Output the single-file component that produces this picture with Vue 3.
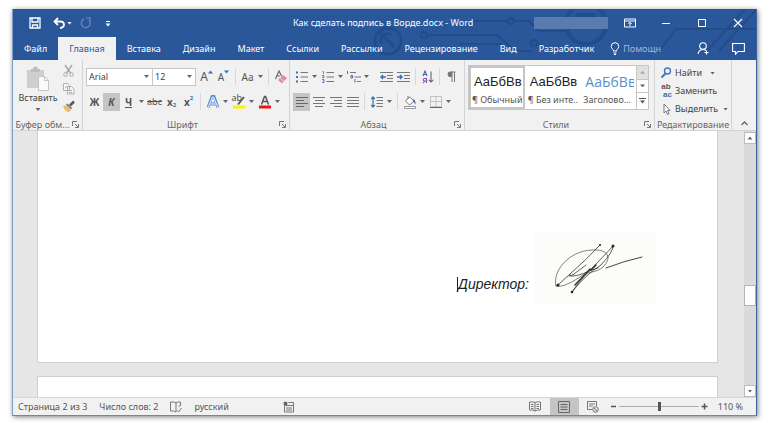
<script setup>
import { ref } from 'vue'

const tabs = ['Файл', 'Главная', 'Вставка', 'Дизайн', 'Макет', 'Ссылки', 'Рассылки', 'Рецензирование', 'Вид', 'Разработчик']
const activeTab = ref('Главная')
const styles = [
  { name: '¶ Обычный', kind: 'normal' },
  { name: '¶ Без инте...', kind: 'normal' },
  { name: 'Заголово...', kind: 'heading' }
]
const activeStyle = ref(0)
const font = ref('Arial')
const size = ref('12')
const zoom = ref(110)
</script>

<template>
  <div class="window">
    <header class="top">
      <svg class="circuit" viewBox="0 0 745 51" aria-hidden="true">
        <g fill="none" stroke="#234c8a" stroke-width="2">
          <circle cx="377" cy="32" r="13" stroke-width="3" />
          <path d="M383 38 371 26M370 35V25h10" stroke-width="3" />
          <path d="M461 12h35M503 12h15l10 10h26M416 26h70l18 16h16M448 35h44M526 34l12 7h26" />
          <circle cx="500" cy="12" r="3" /><circle cx="413" cy="26" r="3" /><circle cx="523" cy="34" r="3" />
          <circle cx="575" cy="15" r="20" stroke-width="4" />
          <path d="M648 42l17-22h80M696 42l38-42M708 42l37-41" />
        </g>
        <path d="M565 4h20v14h-20z" fill="#234c8a" />
      </svg>
      <div class="titlebar">
        <div class="quick">
          <button aria-label="Сохранить"><svg width="12" height="12" viewBox="0 0 12 12"><path d="M1 1h10v10H1zM3 1v4h6V1M3.500 11V8h5v3" fill="none" stroke="#fff" stroke-width="1.300" /></svg></button>
          <button aria-label="Отменить"><svg width="12" height="12" viewBox="0 0 12 12"><path d="M5 1 1.500 4.500 5 8M2 4.500h5q4 0 4 3t-4 3.500" fill="none" stroke="#fff" stroke-width="1.800" /></svg></button>
          <i class="caret light"></i>
          <button aria-label="Повторить"><svg width="12" height="12" viewBox="0 0 12 12"><path d="M4 2a4.500 4.500 0 1 0 5 1M6.500 1H10v4" fill="none" stroke="#5e80b4" stroke-width="1.500" /></svg></button>
          <button class="customize" aria-label="Настройка панели"><svg width="6" height="7" viewBox="0 0 6 7"><path d="M1 1.500h4" stroke="#fff" /><path d="M.5 3.500h5L3 6.500z" fill="#fff" /></svg></button>
        </div>
        <h1>Как сделать подпись в Ворде.docx - Word</h1>
        <div class="account"></div>
        <div class="controls">
          <button aria-label="Параметры ленты"><svg width="12" height="12" viewBox="0 0 12 12"><path d="M.5 2h11v8H.5zM.5 4h11M6 9V5.500M4.300 7 6 5.300 7.700 7" fill="none" stroke="#fff" /></svg></button>
          <button aria-label="Свернуть"><svg width="12" height="12" viewBox="0 0 12 12"><path d="M2 6.500h8" stroke="#fff" /></svg></button>
          <button aria-label="Развернуть"><svg width="12" height="12" viewBox="0 0 12 12"><path d="M2.500 2.500h7v7h-7z" fill="none" stroke="#fff" /></svg></button>
          <button aria-label="Закрыть"><svg width="12" height="12" viewBox="0 0 12 12"><path d="m2 2 8 8m0-8-8 8" stroke="#fff" stroke-width="1.100" /></svg></button>
        </div>
      </div>
      <nav class="tabs">
        <button v-for="t in tabs" :key="t" class="tab" :class="{ active: t === activeTab }" @click="activeTab = t">{{ t }}</button>
        <label class="assist">
          <svg width="10" height="13" viewBox="0 0 10 13"><path d="M3.500 9V8Q1.200 6.500 1.200 4.500a3.800 3.800 0 0 1 7.600 0Q8.800 6.500 6.500 8v1zM3.500 11h3M4 12.500h2" fill="none" stroke="#fff" /></svg>
          <input type="text" placeholder="Помощн" aria-label="Помощн">
        </label>
        <div class="share">
          <button aria-label="Общий доступ"><svg width="13" height="13" viewBox="0 0 13 13"><circle cx="6" cy="4" r="3.300" fill="none" stroke="#fff" stroke-width="1.100" /><path d="M1 12q1-4.500 5-4.500 2 0 3 1.200M9.500 8.500v4M7.500 10.500h4" fill="none" stroke="#fff" stroke-width="1.100" /></svg></button>
          <button aria-label="Примечания"><svg width="13" height="13" viewBox="0 0 13 13"><path d="M.6 1.500h11.800v8H6l-2.500 2.800V9.500H.6z" fill="none" stroke="#fff" stroke-width="1.100" /></svg></button>
        </div>
      </nav>
    </header>

    <section class="ribbon">
      <div class="group clipboard">
        <div class="body clip">
          <button class="paste">
            <svg width="24" height="25" viewBox="0 0 24 25"><path d="M1 4h17v18H1z" fill="#cfcfcf" /><path d="M5 6V3h2q0-2.500 2.500-2.500T12 3h2v3z" fill="#bdbdbd" /><path d="M12.500 10.500h6l4 4v10h-10z" fill="#fafafa" stroke="#c4c4c4" /><path d="M18.500 10.500v4h4" fill="none" stroke="#c4c4c4" /></svg>
            <span>Вставить</span>
            <i class="caret"></i>
          </button>
          <div class="clip-side">
            <button aria-label="Вырезать"><svg width="13" height="13" viewBox="0 0 13 13" fill="none" stroke="#a6a6a6"><path d="M3 1l5.500 8M10 1 4.500 9" stroke-width="1.400" /><circle cx="3.500" cy="10.500" r="1.800" /><circle cx="9.500" cy="10.500" r="1.800" /></svg></button>
            <button aria-label="Копировать"><svg width="13" height="13" viewBox="0 0 13 13" fill="#f5f5f5" stroke="#b0b0b0"><path d="M1.500 1.500h4l2 2v5h-6zM5.500 4.500h4l2.500 2.500v5H5.500z" /><path d="M7 8.500h3M7 10.500h3M3 5h2" /></svg></button>
            <button aria-label="Формат по образцу"><svg width="13" height="13" viewBox="0 0 13 13"><path d="M1 6l3-1 5 5-2 2q-4 0-6-6z" fill="#edbd6b" /><path d="m4 4.500 1.500-1L10 8 9 9.500z" fill="#777" /><path d="m8 5.500 4-4" stroke="#555" stroke-width="2.500" /></svg></button>
          </div>
        </div>
        <footer><span>Буфер обм...</span><svg class="launch" viewBox="0 0 7 7"><path d="M.5 5V.5H5M3 3l3 3M6.500 3v3.500H3" fill="none" stroke="#777" /></svg></footer>
      </div>

      <div class="group fonts">
        <div class="body">
          <div class="row">
            <div class="combo wide"><select v-model="font" aria-label="Шрифт"><option>Arial</option></select><i class="caret"></i></div>
            <div class="combo"><select v-model="size" aria-label="Размер"><option>12</option></select><i class="caret"></i></div>
            <button class="tool grow" aria-label="Увеличить размер">A<svg width="5" height="4" viewBox="0 0 5 4"><path d="M0 3.500 2.500.5 5 3.500z" fill="#3f6fae" /></svg></button>
            <button class="tool grow small" aria-label="Уменьшить размер">A<svg width="5" height="4" viewBox="0 0 5 4"><path d="M0 .5h5L2.500 3.500z" fill="#3f6fae" /></svg></button>
            <i class="sep"></i>
            <button class="tool">Aa</button><i class="caret"></i>
            <i class="sep"></i>
            <button class="tool" aria-label="Очистить формат"><svg width="14" height="14" viewBox="0 0 14 14"><path d="M1.500 9 5 1l2.500 5M2.800 6H6" fill="none" stroke="#666" stroke-width="1.200" /><path d="m4 10 5-5 4 3-5 5.500z" fill="#e28a9c" /><path d="m6 8 4 3.500" stroke="#f7d5dc" /></svg></button>
          </div>
          <div class="row">
            <button class="tool bold">Ж</button>
            <button class="tool bold italic on">К</button>
            <button class="tool bold under">Ч</button><i class="caret"></i>
            <button class="tool strike">abc</button>
            <button class="tool bold">x<sub>2</sub></button>
            <button class="tool bold">x<sup>2</sup></button>
            <i class="sep"></i>
            <button class="tool" aria-label="Текстовые эффекты"><svg width="14" height="14" viewBox="0 0 14 14"><path d="M2 12.500 6 1.500h2l4 11M4 9h6" fill="none" stroke="#5c8fd0" stroke-width="2.800" /><path d="M2 12.500 6.500 2h1L12 12.500M4 9h6" fill="none" stroke="#eef4fc" stroke-width="1" /></svg></button><i class="caret"></i>
            <button class="tool mark" aria-label="Цвет выделения"><span>ab</span><svg width="14" height="14" viewBox="0 0 14 14"><path d="M6 9.500 12 2" stroke="#555" stroke-width="1.800" /><path d="M1 10.500h12v3H1z" fill="#fff200" /></svg></button><i class="caret"></i>
            <button class="tool" aria-label="Цвет текста"><svg width="14" height="14" viewBox="0 0 14 14"><path d="M3.500 9.500 6.500 1.500h1l3 8M4.500 6.500h5" fill="none" stroke="#555" stroke-width="1.500" /><path d="M1 10.500h12v3H1z" fill="#e81416" /></svg></button><i class="caret"></i>
          </div>
        </div>
        <footer><span>Шрифт</span><svg class="launch" viewBox="0 0 7 7"><path d="M.5 5V.5H5M3 3l3 3M6.500 3v3.500H3" fill="none" stroke="#777" /></svg></footer>
      </div>

      <div class="group paragraph">
        <div class="body">
          <div class="row">
            <button class="tool" aria-label="Маркеры"><svg width="12" height="12" viewBox="0 0 12 12"><path d="M4.500 1.500H12M4.500 6H12M4.500 10.500H12" stroke="#777" /><path d="M0 .5h2v2H0zM0 5h2v2H0zM0 9.500h2v2H0z" fill="#3f6fae" /></svg></button><i class="caret"></i>
            <button class="tool" aria-label="Нумерация"><svg width="12" height="12" viewBox="0 0 12 12"><path d="M4.500 1.500H12M4.500 6H12M4.500 10.500H12" stroke="#777" /><path d="M.5.5h1v2.500M0 4.500h2L.5 6.500H2.500M0 8.500h2v3H0M1 10h1" fill="none" stroke="#3f6fae" stroke-width=".8" /></svg></button><i class="caret"></i>
            <button class="tool" aria-label="Многоуровневый список"><svg width="14" height="12" viewBox="0 0 14 12"><path d="M3 1.500h6M7.500 6H14M10 10.500h4" stroke="#777" /><path d="M.5 0v3M4 4.500h1.500v2.500H4zM8 8v3.500" fill="none" stroke="#3f6fae" /></svg></button><i class="caret"></i>
            <i class="sep clear"></i>
            <button class="tool" aria-label="Уменьшить отступ"><svg width="13" height="12" viewBox="0 0 13 12"><path d="M0 1.500h13M7 4.500h6M7 7.500h6M0 10.500h13" stroke="#777" /><path d="M6 6H1m2-2L1 6l2 2" fill="none" stroke="#3f6fae" stroke-width="1.500" /></svg></button>
            <button class="tool" aria-label="Увеличить отступ"><svg width="13" height="12" viewBox="0 0 13 12"><path d="M0 1.500h13M7 4.500h6M7 7.500h6M0 10.500h13" stroke="#777" /><path d="M0 6h5M3 4l2 2-2 2" fill="none" stroke="#3f6fae" stroke-width="1.500" /></svg></button>
            <i class="sep"></i>
            <button class="tool" aria-label="Сортировка"><svg width="12" height="14" viewBox="0 0 12 14" fill="none"><path d="M1 6l2-5 2 5M1.700 4.500h2.600" stroke="#3f6fae" stroke-width="1.100" /><path d="M4.500 13V8.500H2.500q-1.300 0-1.300 1.200T2.500 11h2M2.700 11 1.200 13.200" stroke="#8e4ba8" stroke-width="1.100" /><path d="M9 1.500v10.500M6.800 9.800 9 12l2.200-2.200" stroke="#666" stroke-width="1.100" /></svg></button>
            <i class="sep"></i>
            <button class="tool" aria-label="Все знаки"><svg width="9" height="12" viewBox="0 0 9 12"><path d="M4 1H8.500M5 1v10M7.500 1v10" stroke="#777" /><path d="M5 .5H3.500a2.800 2.800 0 0 0 0 5.600H5z" fill="#777" /></svg></button>
          </div>
          <div class="row">
            <button class="tool on" aria-label="По левому краю"><svg width="12" height="12" viewBox="0 0 12 12"><path d="M0 1.500h12M0 4.500h8M0 7.500h12M0 10.500h8" stroke="#666" /></svg></button>
            <button class="tool" aria-label="По центру"><svg width="12" height="12" viewBox="0 0 12 12"><path d="M0 1.500h12M2 4.500h8M0 7.500h12M2 10.500h8" stroke="#777" /></svg></button>
            <button class="tool" aria-label="По правому краю"><svg width="12" height="12" viewBox="0 0 12 12"><path d="M0 1.500h12M4 4.500h8M0 7.500h12M4 10.500h8" stroke="#777" /></svg></button>
            <button class="tool" aria-label="По ширине"><svg width="12" height="12" viewBox="0 0 12 12"><path d="M0 1.500h12M0 4.500h12M0 7.500h12M0 10.500h12" stroke="#777" /></svg></button>
            <i class="sep"></i>
            <button class="tool" aria-label="Интервал"><svg width="12" height="12" viewBox="0 0 12 12"><path d="M5.500 1.500H12M5.500 4.500H12M5.500 7.500H12M5.500 10.500H12" stroke="#777" /><path d="M2 1v10M.2 3 2 1l1.800 2M.2 9 2 11l1.800-2" fill="none" stroke="#3f6fae" stroke-width="1.200" /></svg></button><i class="caret"></i>
            <i class="sep"></i>
            <button class="tool" aria-label="Заливка"><svg width="14" height="14" viewBox="0 0 14 14"><path d="m2.500 6 4-4 4.500 4-4.500 4zM5 4V1" fill="#fff" stroke="#777" /><path d="M10 4q3 1 2.500 5.500L10.500 7z" fill="#3f6fae" /><path d="M1.500 11.500h11v2h-11z" fill="#fff" stroke="#999" /></svg></button><i class="caret"></i>
            <button class="tool" aria-label="Границы"><svg width="12" height="12" viewBox="0 0 12 12"><path d="M.5.5h11v10H.5zM6 .5v10M.5 5.500h11" fill="none" stroke="#999" stroke-dasharray="1 1" /><path d="M0 11.500h12" stroke="#666" /></svg></button><i class="caret"></i>
          </div>
        </div>
        <footer><span>Абзац</span><svg class="launch" viewBox="0 0 7 7"><path d="M.5 5V.5H5M3 3l3 3M6.500 3v3.500H3" fill="none" stroke="#777" /></svg></footer>
      </div>

      <div class="group styles">
        <div class="body gallery">
          <button v-for="(s, i) in styles" :key="s.name" class="style" :class="[s.kind, { chosen: i === activeStyle }]" @click="activeStyle = i">
            <span class="sample">АаБбВв</span><span class="style-name">{{ s.name }}</span>
          </button>
          <div class="gallery-nav">
            <button class="off" aria-label="Вверх"><i class="caret up"></i></button>
            <button aria-label="Вниз"><i class="caret"></i></button>
            <button aria-label="Все стили"><svg width="7" height="6" viewBox="0 0 7 6"><path d="M0 .5h7" stroke="#555" /><path d="M1 2.500h5l-2.500 3z" fill="#555" /></svg></button>
          </div>
        </div>
        <footer><span>Стили</span><svg class="launch" viewBox="0 0 7 7"><path d="M.5 5V.5H5M3 3l3 3M6.500 3v3.500H3" fill="none" stroke="#777" /></svg></footer>
      </div>

      <div class="group editing">
        <div class="body edit">
          <button><svg width="12" height="12" viewBox="0 0 12 12"><circle cx="7.500" cy="4" r="3" fill="none" stroke="#4477b8" stroke-width="1.400" /><path d="M5.500 6.500 1.500 10.500" stroke="#4477b8" stroke-width="2" /></svg>Найти <i class="caret gap"></i></button>
          <button><span class="swap"><b>ab</b><b class="ac">ac</b></span>Заменить</button>
          <button><svg width="12" height="12" viewBox="0 0 12 12"><path d="M4 1v9l2-2 1.500 3.500 1.500-.7L7.500 7.500H10z" fill="#fff" stroke="#777" /></svg>Выделить<i class="caret"></i></button>
        </div>
        <footer><span>Редактирование</span></footer>
      </div>
      <button class="collapse" aria-label="Свернуть ленту"><svg width="7" height="5" viewBox="0 0 7 5"><path d="m.5 4 3-3 3 3" fill="none" stroke="#666" stroke-width="1.300" /></svg></button>
    </section>

    <main class="workspace">
      <div class="pages">
        <article class="page first">
          <p>Директор:</p>
          <svg class="signature" width="122" height="72" viewBox="0 0 122 72" role="img" aria-label="Подпись">
            <g fill="none" stroke="#333" stroke-linecap="round">
              <path d="M66 13Q52 28 36 42q-1 3 4 0l12-9M35 44q8 1 20-5l9-3M36 42 24 53" stroke-width=".8" />
              <path d="M22 54C18 40 34 19 58 18c17-1 20 8 11 17-7 6-13 4-20 8-9 6-20 13-27 11" stroke-width=".6" />
              <path d="M79 14C66 29 50 42 38 60M79 14q1 5-12 19-16 10-29 27" stroke-width=".8" />
              <path d="m56 37-15 16M57 38l5-5" stroke-width="1.500" />
              <path d="M72 36q18-7 36-11" stroke-width=".9" />
            </g>
            <g fill="#222"><circle cx="79" cy="14" r="1.500" /><circle cx="24" cy="53" r="1.500" /><circle cx="38" cy="60" r="1.300" /><circle cx="66" cy="13" r="1" /></g>
          </svg>
        </article>
        <article class="page next"></article>
      </div>
      <div class="scroll">
        <button aria-label="Прокрутить вверх"><i class="caret up"></i></button>
        <div class="track"><div class="thumb"></div></div>
        <button aria-label="Прокрутить вниз"><i class="caret"></i></button>
      </div>
    </main>

    <footer class="status">
      <span>Страница 2 из 3</span>
      <span>Число слов: 2</span>
      <button aria-label="Правописание"><svg width="12" height="12" viewBox="0 0 12 12"><path d="M6 2Q4 .5.5 1v9q3-.5 5.500 1V2Q8 .5 10.500 1v3" fill="none" stroke="#777" /><path d="m7 9.500 1.500 1.500L11.500 7" fill="none" stroke="#777" /><path d="M8.500 5.500 11 4" stroke="#777" /></svg></button>
      <span>русский</span>
      <button class="macro" aria-label="Макросы"><svg width="12" height="12" viewBox="0 0 12 12"><path d="M1.500 4.500h9v6.500h-9zM5.500 1.500h5v3M3 7h6M3 9h6" fill="none" stroke="#777" /><circle cx="2.500" cy="2.500" r="2" fill="#666" /></svg></button>
      <div class="views">
        <button aria-label="Режим чтения"><svg width="12" height="11" viewBox="0 0 12 11"><path d="M6 1.500q-2-1-5.500-.5v8q3-.5 5.500 1 2.500-1.500 5.500-1V1Q8 .5 6 1.500zV10M2 3.500h2.500M2 5.500h2.500M2 7.500h2.500M7.500 3.500H10M7.500 5.500H10M7.500 7.500H10" fill="none" stroke="#777" /></svg></button>
        <button class="on" aria-label="Разметка страницы"><svg width="12" height="12" viewBox="0 0 12 12"><path d="M.5.5h11v11H.5zM2.500 3.500h7M2.500 6h7M2.500 8.500h7" fill="none" stroke="#666" /></svg></button>
        <button aria-label="Веб-документ"><svg width="12" height="12" viewBox="0 0 12 12"><path d="M5 8.500H.5v-8h9V5M2 3h6M2 5h4" fill="none" stroke="#777" /><circle cx="8.500" cy="8.500" r="2.800" fill="#ddd" stroke="#777" /><path d="m7 7 3 3" stroke="#777" /></svg></button>
      </div>
      <div class="zoom">
        <button aria-label="Уменьшить"><svg width="7" height="7" viewBox="0 0 7 7"><path d="M1 3.500h5" stroke="#555" stroke-width="1.500" /></svg></button>
        <input v-model="zoom" type="range" min="10" max="206" aria-label="Масштаб">
        <button aria-label="Увеличить"><svg width="7" height="7" viewBox="0 0 7 7"><path d="M.5 3.500h6M3.500.5v6" stroke="#555" stroke-width="1.500" /></svg></button>
        <span>{{ zoom }} %</span>
      </div>
    </footer>
  </div>
</template>

<style>
body { background: #fff; }
</style>

<style scoped>
* { box-sizing: border-box; }
.window {
  display: flex; flex-direction: column;
  min-height: calc(100vh - 16px);
  margin: 9px 16px 7px 12px;
  border: 1px solid #7f9cc6; border-top: 0; border-right-color: #3a62a0; border-bottom-color: #6f87ab;
  box-shadow: 1px 1px 5px rgba(0, 0, 0, .5);
  background: #f1f1f1; color: #444;
  font: 9px/12px "Noto Sans", "Open Sans", sans-serif;
}
button { display: inline-flex; align-items: center; justify-content: center; padding: 0; border: 0; background: none; color: inherit; font: inherit; white-space: nowrap; }
svg { display: block; flex: none; }
.caret { flex: none; width: 9px; height: 3px; background: #666; clip-path: polygon(2px 0, 7px 0, 4.5px 3px); }
.caret.up { clip-path: polygon(2px 3px, 7px 3px, 4.5px 0); }
.caret.light { background: #fff; }

.top { position: relative; overflow: hidden; background: #2a579a; color: #fff; }
.circuit { position: absolute; top: 0; right: 0; width: 745px; height: 51px; }
.titlebar { position: relative; display: grid; grid-template-columns: 280px auto 1fr auto; align-items: center; height: 28px; }
.titlebar h1 { margin: 0; font-size: 9px; font-weight: 400; }
.quick { display: flex; align-items: center; padding: 0 16px; }
.quick button { width: 12px; margin-right: 12px; }
.quick button:nth-of-type(2) { margin-right: 0; }
.quick .caret { margin-right: 6px; }
.quick .customize { margin-left: -2px; }
.account { justify-self: end; width: 74px; height: 12px; margin-right: 4px; background: #587bb0; }
.controls { display: flex; }
.controls button { width: 36px; height: 24px; }
.tabs { position: relative; display: flex; height: 23px; }
.tab { padding: 0 11px; }
.tab.active { background: #f1f1f1; color: #2a579a; }
.assist { display: flex; align-items: center; gap: 3px; margin-left: 5px; }
.assist input { width: 40px; padding: 0; border: 0; outline: 0; background: none; color: #fff; font: inherit; }
.assist input::placeholder { color: #a3b8d8; opacity: 1; }
.share { display: flex; gap: 22px; margin-left: auto; padding-right: 11px; }

.ribbon { display: flex; height: 71px; border-bottom: 1px solid #d2d2d2; }
.group { display: flex; flex-direction: column; flex: none; padding: 4px 0 0; border-right: 1px solid #d4d4d4; }
.clipboard { width: 70px; }
.fonts { width: 207px; padding-left: 3px; }
.paragraph { width: 175px; padding-left: 3px; }
.ribbon .styles { flex: 1; min-width: 0; padding-left: 3px; }
.editing { width: 77px; }
.group footer { display: flex; align-items: center; flex: none; height: 11px; color: #666; }
.group footer span { flex: 1; text-align: center; white-space: nowrap; }
.launch { width: 7px; height: 7px; margin-right: 3px; }
.body { flex: 1; }
.row { display: flex; align-items: center; height: 25px; }
.tool { flex: none; width: 17px; height: 18px; color: #555; font-size: 10px; }
.tool.on { background: #c5c5c5; }
.sep { flex: none; width: 1px; height: 17px; margin: 0 3px; background: #d8d8d8; }
.sep.clear { background: none; }
.combo { position: relative; display: flex; align-items: center; width: 44px; height: 18px; margin-right: 2px; border: 1px solid #c6c6c6; background: #fff; }
.combo.wide { width: 67px; margin-right: -1px; }
.combo select { width: 100%; padding: 0 2px; border: 0; outline: 0; background: none; appearance: none; color: #444; font: inherit; }
.combo .caret { position: absolute; right: 1px; }
.grow { align-items: center; font-size: 12px; }
.grow svg { align-self: flex-start; margin-top: 2px; }
.grow.small { font-size: 10px; }
.bold { font-size: 10px; font-weight: 700; }
.italic { font-style: italic; }
.under { text-decoration: underline; }
.strike { font-size: 9px; text-decoration: line-through; }
sub, sup { font-size: 6px; line-height: 6px; color: #3f6fae; }
sub { align-self: flex-end; margin-bottom: 3px; }
sup { align-self: flex-start; margin-top: 2px; }
.mark { display: grid; place-items: center; font-size: 9px; }
.mark > * { grid-area: 1 / 1; }
.mark span { align-self: start; justify-self: start; line-height: 10px; }

.clip { display: flex; }
.paste { flex-direction: column; justify-content: flex-start; gap: 1px; width: 49px; padding: 2px 0 0 1px; }
.paste .caret { margin-top: 3px; }
.clip-side { display: flex; flex-direction: column; justify-content: space-between; height: 49px; }

.styles .gallery { display: flex; flex: none; height: 45px; margin: 1px 5px 2px 0; border: 1px solid #c6c6c6; background: #fff; }
.style { flex: 1; min-width: 0; flex-direction: column; align-items: flex-start; overflow: hidden; padding: 2px 1px 0; border: 2px solid transparent; color: #555; }
.style.chosen { border-color: #c5c5c5; }
.sample { padding-left: 2px; color: #222; font: 13px/22px "Liberation Sans", Arial, sans-serif; }
.heading .sample { color: #5b8fc8; font: 14px/22px "Open Sans", sans-serif; }
.style-name { line-height: 14px; }
.gallery-nav { display: grid; width: 12px; border-left: 1px solid #c6c6c6; }
.gallery-nav button + button { border-top: 1px solid #c6c6c6; }
.gallery-nav .off { background: #e0e0e0; }
.gallery-nav .off .caret { background: #aaa; }
.styles footer { margin-top: auto; }
.edit { display: flex; flex-direction: column; align-items: flex-start; padding-left: 5px; }
.edit button { gap: 3px; height: 18px; }
.edit .gap { margin-left: 3px; }
.swap { display: grid; width: 12px; font: 8px/8px "Liberation Sans", Arial, sans-serif; color: #555; }
.swap .ac { justify-self: end; color: #3f6fae; }
.collapse { align-self: flex-end; flex: none; width: 24px; height: 14px; }

.workspace { display: flex; flex: 1; background: #e6e6e6; }
.pages { display: flex; flex: 1; flex-direction: column; gap: 13px; padding: 0 26px 0 24px; }
.page { border: 1px solid #cfcfcf; background: #fff; }
.first { display: flex; align-items: center; justify-content: flex-end; gap: 5px; padding: 101px 61px 58px 0; border-top: 0; }
.first p { margin: 32px 0 0; border-left: 1px solid #222; color: #222; font: italic 14px/15px "Liberation Sans", Arial, sans-serif; }
.signature { background: #fcfdfa; }
.next { flex: 1; border-bottom: 0; }
.scroll { display: flex; flex-direction: column; width: 12px; background: #dadada; }
.scroll button { height: 12px; margin-top: 1px; border: 1px solid #bbb; background: #fff; }
.track { flex: 1; padding-top: 141px; }
.thumb { height: 21px; border: 1px solid #b5b5b5; background: #fff; }

.status { display: flex; align-items: center; gap: 12px; height: 18px; padding-left: 5px; border-top: 1px solid #d6d6d6; color: #555; }
.macro { margin-left: 42px; }
.views { display: flex; align-self: stretch; margin-left: auto; }
.views button { width: 29px; }
.views .on { background: #c5c5c5; }
.zoom { display: flex; align-items: center; gap: 2px; margin-left: -10px; padding-right: 13px; }
.zoom span { margin-left: 8px; white-space: nowrap; }
.zoom input { width: 80px; height: 12px; margin: 0; appearance: none; background: linear-gradient(#aaa, #aaa) center / 100% 1px no-repeat; }
.zoom input::-webkit-slider-thumb { appearance: none; width: 3px; height: 9px; background: #555; }
</style>
